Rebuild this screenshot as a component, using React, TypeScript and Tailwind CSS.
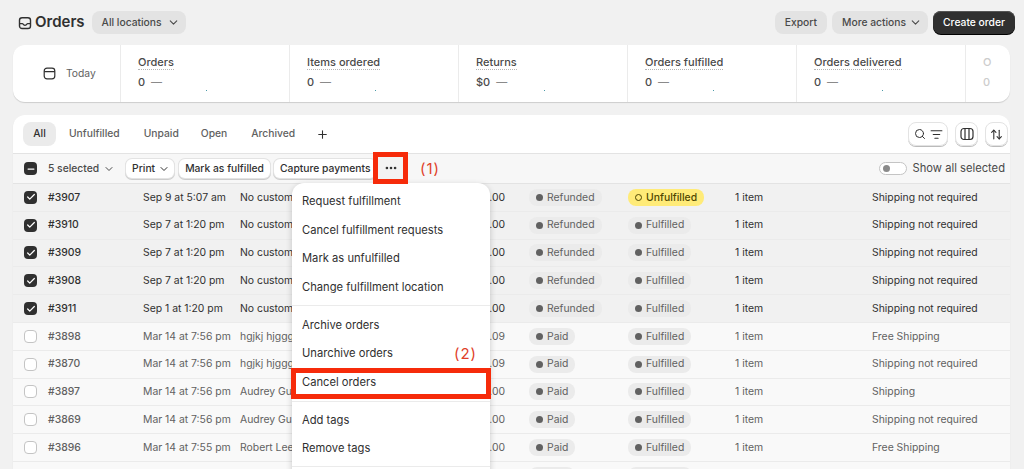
import { ChevronDown, Plus, Ellipsis, Check, Minus, Search, ListFilter, ArrowUpDown } from "lucide-react";

const stats = [
  { label: "Orders", value: "0" },
  { label: "Items ordered", value: "0" },
  { label: "Returns", value: "$0" },
  { label: "Orders fulfilled", value: "0" },
  { label: "Orders delivered", value: "0" },
];

const rows = [
  { id: "#3907", date: "Sep 9 at 5:07 am", customer: "No customer", total: ".00", pay: "Refunded", ful: "Unfulfilled", ship: "Shipping not required", on: true },
  { id: "#3910", date: "Sep 7 at 1:20 pm", customer: "No customer", total: ".00", pay: "Refunded", ful: "Fulfilled", ship: "Shipping not required", on: true },
  { id: "#3909", date: "Sep 7 at 1:20 pm", customer: "No customer", total: ".00", pay: "Refunded", ful: "Fulfilled", ship: "Shipping not required", on: true },
  { id: "#3908", date: "Sep 7 at 1:20 pm", customer: "No customer", total: ".00", pay: "Refunded", ful: "Fulfilled", ship: "Shipping not required", on: true },
  { id: "#3911", date: "Sep 1 at 1:20 pm", customer: "No customer", total: ".00", pay: "Refunded", ful: "Fulfilled", ship: "Shipping not required", on: true },
  { id: "#3898", date: "Mar 14 at 7:56 pm", customer: "hgjkj hjggg", total: ".09", pay: "Paid", ful: "Fulfilled", ship: "Free Shipping", on: false },
  { id: "#3870", date: "Mar 14 at 7:56 pm", customer: "hgjkj hjggg", total: ".09", pay: "Paid", ful: "Fulfilled", ship: "Shipping not required", on: false },
  { id: "#3897", date: "Mar 14 at 7:56 pm", customer: "Audrey Gu", total: ".00", pay: "Paid", ful: "Fulfilled", ship: "Shipping", on: false },
  { id: "#3869", date: "Mar 14 at 7:56 pm", customer: "Audrey Gu", total: ".00", pay: "Paid", ful: "Fulfilled", ship: "Shipping not required", on: false },
  { id: "#3896", date: "Mar 14 at 7:55 pm", customer: "Robert Lee", total: ".00", pay: "Paid", ful: "Fulfilled", ship: "Free Shipping", on: false },
];

const COLS = "grid h-[27.8px] grid-cols-[35px_95px_97px_289px_99px_107px_137px_1fr] items-center border-b border-[#ebebeb]";

function OrdersIcon() {
  return (
    <svg width="14" height="14" viewBox="0 0 14 14" fill="none" stroke="#303030" strokeWidth="1.4" className="mr-[3px]">
      <rect x="1.5" y="1.7" width="11" height="10.8" rx="2.6" />
      <path d="M1.6 7.6h2.6c.5 0 .8.3 1 .7.3.6.9 1 1.8 1s1.500-.4 1.800-1c.2-.4.5-.7 1-.7h2.600" />
    </svg>
  );
}

function CalendarIcon() {
  return (
    <svg width="13" height="13" viewBox="0 0 13 13" fill="none" stroke="#303030" strokeWidth="1.2">
      <rect x="1.2" y="1.2" width="10.600" height="10.600" rx="2.800" />
      <path d="M1.2 4.700h10.600" />
    </svg>
  );
}

function ColumnsIcon() {
  return (
    <svg width="14" height="14" viewBox="0 0 14 14" fill="none" stroke="#303030" strokeWidth="1.2">
      <rect x="1" y="1.500" width="12" height="11" rx="3" />
      <path d="M5 1.500v11M9 1.500v11" />
    </svg>
  );
}

function Pill({ text }: { text: string }) {
  if (text === "Unfulfilled") {
    return (
      <span className="inline-flex h-[17px] items-center gap-[4px] rounded-lg bg-[#ffeb78] px-[7px] font-medium text-[#4f4700]">
        <span className="h-[7px] w-[7px] rounded-full border-[1.5px] border-[#4f4700]" />
        {text}
      </span>
    );
  }
  return (
    <span className="inline-flex h-[17px] items-center gap-[4px] rounded-lg bg-[#ebebeb] px-[7px] text-[#616161]">
      <span className="h-[7px] w-[7px] rounded-full bg-[#616161]" />
      {text}
    </span>
  );
}

export default function App() {
  return (
    <div className="relative h-[469px] w-[1024px] overflow-hidden bg-[#f1f1f1] text-[10.3px] text-[#303030] [font-family:Inter,sans-serif]">
      {/* Page header */}
      <div className="flex h-[45px] items-center justify-between pl-[18px] pr-[9px]">
        <div className="flex items-center">
          <OrdersIcon />
          <h1 className="text-[15px] font-semibold">Orders</h1>
          <button className="ml-[7px] flex h-[23px] items-center gap-[5px] rounded-lg bg-[#e3e3e3] pl-[10px] pr-[6px] font-medium text-[#4a4a4a]">
            All locations <ChevronDown size={13} />
          </button>
        </div>
        <div className="flex items-center gap-[5px]">
          <button className="flex h-[23px] items-center rounded-lg bg-[#e3e3e3] px-[10px] font-medium text-[#4a4a4a]">Export</button>
          <button className="flex h-[23px] items-center gap-[3px] rounded-lg bg-[#e3e3e3] pl-[10px] pr-[6px] font-medium text-[#4a4a4a]">
            More actions <ChevronDown size={13} />
          </button>
          <button className="flex h-[23px] items-center rounded-lg bg-[#303030] px-[10px] font-medium text-white shadow-[inset_0_1px_0_#555,0_1px_0_#000]">Create order</button>
        </div>
      </div>

      {/* Stats bar */}
      <div className="mx-[13px] flex h-[57px] w-[997px] overflow-hidden rounded-xl bg-white text-[11px] shadow-[0_1px_1px_rgba(0,0,0,0.15)]">
        <div className="flex w-[107px] shrink-0 items-center gap-[10px] pl-[30px] text-[10.3px] text-[#616161]">
          <CalendarIcon />
          Today
        </div>
        {stats.map((s) => (
          <div key={s.label} className="relative w-[169px] shrink-0 border-l border-[#ebebeb] pl-[17px] pt-[10px]">
            <div className="w-fit border-b border-dotted border-[#b5b5b5] font-medium leading-[14px] text-[#4a4a4a]">{s.label}</div>
            <div className="mt-[4px] flex items-center gap-[6px] font-medium text-[#4a4a4a]">
              <span>{s.value}</span>
              <span className="text-[#8a8a8a]">—</span>
            </div>
            {/* end of the sparkline */}
            <span className="absolute left-[85px] top-[45px] h-[1px] w-[1px] bg-[#4a9aa8]" />
          </div>
        ))}
        <div className="flex-1 border-l border-[#ebebeb] pl-[17px] pt-[10px] font-medium text-[#cccccc]">
          <div className="leading-[14px]">O</div>
          <div className="mt-[5px]">0</div>
        </div>
      </div>

      {/* Orders table */}
      <div className="mx-[13px] mt-[13px] w-[997px] rounded-t-xl bg-white shadow-[0_1px_1px_rgba(0,0,0,0.15)]">
        <div className="flex h-[38px] items-center justify-between pl-[10px] pr-[2px]">
          <div className="flex items-center font-medium text-[#616161]">
            <span className="flex h-[24px] w-[33px] items-center justify-center rounded-lg bg-[#ebebeb] text-[#303030]">All</span>
            <span className="ml-[13px]">Unfulfilled</span>
            <span className="ml-[24px]">Unpaid</span>
            <span className="ml-[22px]">Open</span>
            <span className="ml-[24px]">Archived</span>
            <Plus size={13} className="ml-[21px] text-[#303030]" />
          </div>
          <div className="flex items-center gap-[7px]">
            <button className="flex h-[24px] w-[40px] items-center justify-center gap-[4px] rounded-lg border border-[#e3e3e3] shadow-[0_1px_0_#bbb]">
              <Search size={12} />
              <ListFilter size={13} />
            </button>
            <button className="flex h-[24px] w-[23px] items-center justify-center rounded-lg border border-[#e3e3e3] shadow-[0_1px_0_#bbb]">
              <ColumnsIcon />
            </button>
            <button className="flex h-[24px] w-[23px] items-center justify-center rounded-lg border border-[#e3e3e3] shadow-[0_1px_0_#bbb]">
              <ArrowUpDown size={13} />
            </button>
          </div>
        </div>

        {/* Bulk actions */}
        <div className="flex h-[31px] items-center justify-between border-y border-[#e3e3e3] bg-[#f7f7f7] pl-[11px] pr-[5px]">
          <div className="flex items-center">
            <span className="flex h-[13px] w-[13px] items-center justify-center rounded-[4px] bg-[#303030]">
              <Minus size={10} strokeWidth={3} className="text-white" />
            </span>
            <span className="ml-[11px] flex items-center gap-[4px] font-medium text-[#4a4a4a]">5 selected <ChevronDown size={12} /></span>
            <button className="ml-[11px] flex h-[19px] items-center gap-[3px] rounded-md bg-white pl-[6px] pr-[4px] font-medium shadow-[0_0_0_1px_#e3e3e3,0_1px_0_1px_#ccc]">
              Print <ChevronDown size={12} />
            </button>
            <button className="ml-[5px] flex h-[19px] items-center rounded-md bg-white px-[6px] font-medium shadow-[0_0_0_1px_#e3e3e3,0_1px_0_1px_#ccc]">Mark as fulfilled</button>
            <button className="ml-[4px] flex h-[19px] items-center rounded-md bg-white px-[6px] font-medium shadow-[0_0_0_1px_#e3e3e3,0_1px_0_1px_#ccc]">Capture payments</button>
          </div>
          <div className="flex items-center gap-[6px] text-[11.2px] text-[#4a4a4a]">
            <span className="flex h-[13px] w-[28px] items-center rounded-full border border-[#c4c4c4] bg-white pl-[3px]">
              <span className="h-[7px] w-[7px] rounded-full bg-[#8a8a8a]" />
            </span>
            Show all selected
          </div>
        </div>

        {/* Rows */}
        {rows.map((r) => (
          <div key={r.id} className={`${COLS} text-[10.4px] ${r.on ? "bg-[#f1f1f1] text-[#303030]" : "bg-[#f9f9f9] text-[#616161]"}`}>
            <span className={`ml-[11px] flex h-[13px] w-[13px] items-center justify-center rounded-[4px] ${r.on ? "bg-[#303030]" : "border border-[#c4c4c4] bg-white"}`}>
              {r.on && <Check size={10} strokeWidth={3} className="text-white" />}
            </span>
            <span className="font-medium">{r.id}</span>
            <span>{r.date}</span>
            <span className="flex justify-between pr-[24px]">
              <span>{r.customer}</span>
              <span>{r.total}</span>
            </span>
            <span><Pill text={r.pay} /></span>
            <span><Pill text={r.ful} /></span>
            <span>1 item</span>
            <span>{r.ship}</span>
          </div>
        ))}
        {/* next row, only its top shows above the fold */}
        <div className={`${COLS} bg-[#f9f9f9]`}>
          <span className="ml-[11px] h-[13px] w-[13px] rounded-[4px] border border-[#c4c4c4] bg-white" />
          <span />
          <span />
          <span />
          <span className="h-[17px] w-[46px] rounded-lg bg-[#ebebeb]" />
          <span className="h-[17px] w-[64px] rounded-lg bg-[#ebebeb]" />
        </div>
      </div>

      {/* Bulk actions menu */}
      <div className="absolute left-[292px] top-[183px] w-[198px] rounded-t-xl bg-white text-[11.2px] text-[#303030] shadow-[0_2px_6px_rgba(0,0,0,0.2)]">
        <div className="px-[10px] pb-[3px] pt-[4px]">
          {["Request fulfillment", "Cancel fulfillment requests", "Mark as unfulfilled", "Change fulfillment location"].map((m) => (
            <div key={m} className="flex h-[28.75px] items-center">{m}</div>
          ))}
        </div>
        <div className="border-t border-[#ebebeb] px-[10px] pb-[4px] pt-[5px]">
          {["Archive orders", "Unarchive orders", "Cancel orders"].map((m) => (
            <div key={m} className="flex h-[28.5px] items-center">{m}</div>
          ))}
        </div>
        <div className="border-t border-[#ebebeb] px-[10px] pb-[3px] pt-[5px]">
          {["Add tags", "Remove tags"].map((m) => (
            <div key={m} className="flex h-[28px] items-center">{m}</div>
          ))}
        </div>
        <div className="h-[20px] border-t border-[#ebebeb]" />
      </div>

      {/* Annotations */}
      <div className="absolute left-[373px] top-[152px] flex h-[32px] w-[35px] items-center justify-center border-[5px] border-[#f62b0a] bg-[#f3f3f3]">
        <Ellipsis size={14} strokeWidth={2.5} className="text-[#303030]" />
      </div>
      <span className="absolute left-[420px] top-[159px] text-[15px] leading-[20px] tracking-[1px] text-[#e0402a]">(1)</span>
      <span className="absolute left-[454px] top-[344px] text-[15px] leading-[20px] tracking-[1px] text-[#e0402a]">(2)</span>
      <div className="absolute left-[291px] top-[368px] h-[31px] w-[200px] border-[5px] border-[#f62b0a]" />
    </div>
  );
}
